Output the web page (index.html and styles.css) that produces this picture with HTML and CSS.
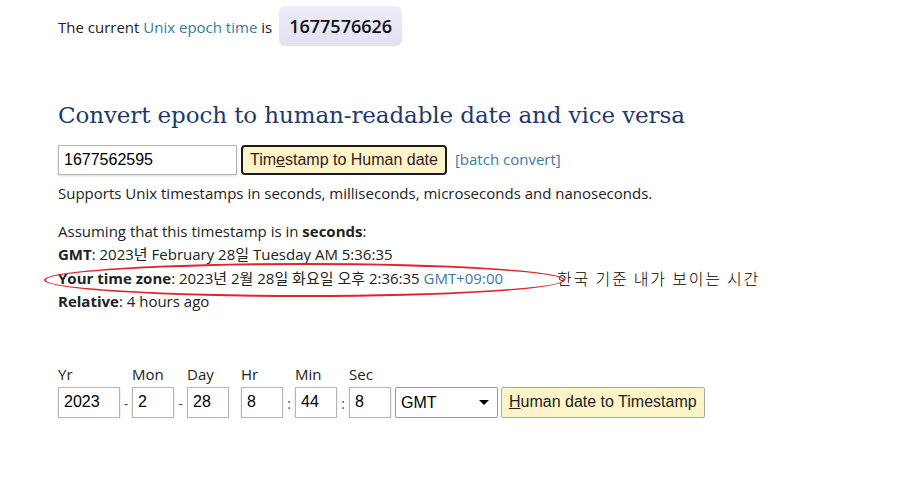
FILE: index.html
```html
<!DOCTYPE html>
<html lang="en">
<head>
    <meta charset="UTF-8">
    <meta name="viewport" content="width=device-width, initial-scale=1.0">
    <title>Epoch Converter</title>
    <link rel="stylesheet" href="styles.css">
</head>
<body>
    <div class="container">
        <p class="now"><span class="now-text">The current <a href="#">Unix epoch time</a> is</span><span class="epoch">1677576626</span></p>

        <h2 class="title">Convert epoch to human-readable date and vice versa</h2>

        <div class="convert-row">
            <input type="text" class="ts-input" value="1677562595">
            <button class="btn btn-focus">Tim<u>e</u>stamp to Human date</button>
            <a href="#" class="batch">[batch convert]</a>
        </div>
        <p class="note">Supports Unix timestamps in seconds, milliseconds, microseconds and nanoseconds.</p>

        <div class="result">
            <p>Assuming that this timestamp is in <b>seconds</b>:</p>
            <p><b>GMT</b>: 2023년 February 28일 Tuesday AM 5:36:35</p>
            <p class="tz-line">
                <span class="circled"><b>Your time zone</b>: 2023년 2월 28일 화요일 오후 2:36:35 <a href="#">GMT+09:00</a></span>
                <span class="memo">한국 기준 내가 보이는 시간</span>
            </p>
            <p><b>Relative</b>: 4 hours ago</p>
        </div>

        <div class="date-form">
            <div class="field">
                <label>Yr</label>
                <input type="text" class="num yr" value="2023">
            </div>
            <span class="sep">-</span>
            <div class="field">
                <label>Mon</label>
                <input type="text" class="num" value="2">
            </div>
            <span class="sep wide">-</span>
            <div class="field">
                <label>Day</label>
                <input type="text" class="num" value="28">
            </div>
            <span class="sep"></span>
            <div class="field">
                <label>Hr</label>
                <input type="text" class="num" value="8">
            </div>
            <span class="sep">:</span>
            <div class="field">
                <label>Min</label>
                <input type="text" class="num" value="44">
            </div>
            <span class="sep">:</span>
            <div class="field">
                <label>Sec</label>
                <input type="text" class="num" value="8">
            </div>
            <span class="select-wrap">
                <select class="tz-select">
                    <option>GMT</option>
                    <option>Local time</option>
                </select>
            </span>
            <button class="btn btn-human"><u>H</u>uman date to Timestamp</button>
        </div>
    </div>
</body>
</html>
```

FILE: styles.css
```css
* {
    margin: 0;
    padding: 0;
    box-sizing: border-box;
}

body {
    background: #fff;
    color: #222;
    font-family: 'Open Sans', 'Noto Sans CJK KR', sans-serif;
    font-size: 15px;
    line-height: 23.5px;
}

a {
    color: #3a7aa3;
    text-decoration: none;
}

.container {
    padding: 6px 0 0 58px;
}

.now {
    display: flex;
    align-items: center;
    white-space: pre;
}

.now-text {
    padding-top: 3px;
}

.epoch {
    margin-left: 7px;
    padding: 0 10px;
    height: 40px;
    line-height: 40px;
    border-radius: 6px;
    background: linear-gradient(180deg, #eeeefa 0%, #e1e1f0 100%);
    font-size: 18px;
    font-weight: 600;
    color: #111;
}

.title {
    margin-top: 52px;
    font-family: 'DejaVu Serif', serif;
    font-weight: normal;
    font-size: 23px;
    letter-spacing: -0.1px;
    line-height: 34px;
    color: #1e3a6c;
}

.convert-row {
    display: flex;
    align-items: center;
    margin-top: 13px;
}

.ts-input {
    width: 179px;
    height: 30px;
    padding: 0 5px;
    border: 1px solid #b5b5b5;
    box-shadow: 0 1px 2px rgba(0, 0, 0, 0.15);
    font-family: 'Liberation Sans', Arial, sans-serif;
    font-size: 16px;
    color: #000;
}

.btn {
    font-family: 'Liberation Sans', Arial, sans-serif;
    font-size: 16px;
    color: #222;
    background: #fdf5c9;
    cursor: pointer;
}

.btn-focus {
    margin-left: 4px;
    height: 30px;
    padding: 0 7px;
    border: 2px solid #1a1a1a;
    border-radius: 4px;
    color: #3a1a1a;
}

.batch {
    margin-left: 8px;
}

.note {
    margin-top: 7px;
}

.result {
    margin-top: 14px;
}

.tz-line {
    position: relative;
    display: flex;
    white-space: pre;
}

.circled {
    position: relative;
}

.circled::before {
    content: '';
    position: absolute;
    left: -14px;
    top: -4px;
    width: 517px;
    height: 30px;
    border: 2px solid #e0242c;
    border-radius: 50%;
}

.memo {
    margin-left: 54px;
    font-family: 'Noto Sans CJK KR', sans-serif;
    font-size: 16px;
    letter-spacing: 1.8px;
    font-weight: 300;
    color: #000;
}

.date-form {
    display: flex;
    align-items: flex-end;
    margin-top: 49px;
}

.field {
    display: flex;
    flex-direction: column;
}

.field label {
    line-height: 22px;
    margin-bottom: 2px;
}

.num {
    width: 42px;
    height: 31px;
    padding: 0 5px;
    border: 1px solid #b5b5b5;
    box-shadow: 0 1px 2px rgba(0, 0, 0, 0.15);
    font-family: 'Liberation Sans', Arial, sans-serif;
    font-size: 16px;
    color: #000;
}

.num.yr {
    width: 62px;
}

.sep {
    width: 12px;
    height: 31px;
    line-height: 33px;
    text-align: center;
    font-size: 14px;
    color: #555;
}

.sep.wide {
    width: 13px;
}

.select-wrap {
    position: relative;
    margin-left: 4px;
}

.select-wrap::after {
    content: '';
    position: absolute;
    right: 9px;
    top: 13px;
    border-left: 5px solid transparent;
    border-right: 5px solid transparent;
    border-top: 5px solid #000;
}

.tz-select {
    appearance: none;
    -webkit-appearance: none;
    width: 103px;
    height: 31px;
    padding: 0 5px;
    border: 1px solid #999;
    border-radius: 2px;
    background: #fff;
    font-family: 'Liberation Sans', Arial, sans-serif;
    font-size: 16px;
    color: #000;
}

.btn-human {
    margin-left: 3px;
    height: 31px;
    padding: 0 7px;
    border: 1px solid #aaa;
    border-radius: 2px;
}
```
